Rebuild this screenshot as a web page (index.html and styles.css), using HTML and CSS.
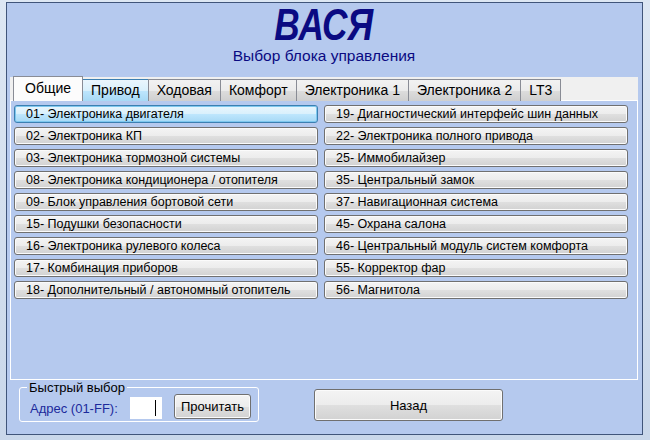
FILE: index.html
```html
<!DOCTYPE html>
<html lang="ru">
<head>
    <meta charset="UTF-8">
    <title>ВАСЯ - Выбор блока управления</title>
    <link rel="stylesheet" href="styles.css">
</head>
<body>
    <div class="frame">
        <div class="window">
            <div class="header">
                <h1 class="title"><span>ВАСЯ</span></h1>
                <p class="subtitle">Выбор блока управления</p>
            </div>

            <div class="tabs">
                <div class="tab-strip">
                    <div class="tab active">Общие</div>
                    <div class="tab hover">Привод</div>
                    <div class="tab">Ходовая</div>
                    <div class="tab">Комфорт</div>
                    <div class="tab">Электроника 1</div>
                    <div class="tab">Электроника 2</div>
                    <div class="tab">LT3</div>
                </div>
                <div class="tab-panel">
                    <div class="modules">
                        <button class="btn module focused">01- Электроника двигателя</button>
                        <button class="btn module">19- Диагностический интерфейс шин данных</button>
                        <button class="btn module">02- Электроника КП</button>
                        <button class="btn module">22- Электроника полного привода</button>
                        <button class="btn module">03- Электроника тормозной системы</button>
                        <button class="btn module">25- Иммобилайзер</button>
                        <button class="btn module">08- Электроника кондиционера / отопителя</button>
                        <button class="btn module">35- Центральный замок</button>
                        <button class="btn module">09- Блок управления бортовой сети</button>
                        <button class="btn module">37- Навигационная система</button>
                        <button class="btn module">15- Подушки безопасности</button>
                        <button class="btn module">45- Охрана салона</button>
                        <button class="btn module">16- Электроника рулевого колеса</button>
                        <button class="btn module">46- Центральный модуль систем комфорта</button>
                        <button class="btn module">17- Комбинация приборов</button>
                        <button class="btn module">55- Корректор фар</button>
                        <button class="btn module">18- Дополнительный / автономный отопитель</button>
                        <button class="btn module">56- Магнитола</button>
                    </div>
                </div>
            </div>

            <div class="bottom">
                <fieldset class="quick">
                    <legend>Быстрый выбор</legend>
                    <span class="addr-label">Адрес (01-FF):</span>
                    <div class="addr-box"><span class="caret"></span></div>
                    <button class="btn read">Прочитать</button>
                </fieldset>
                <button class="btn back">Назад</button>
            </div>
        </div>
    </div>
</body>
</html>
```

FILE: styles.css
```css
* {
    box-sizing: border-box;
}

body {
    margin: 0;
    background: #d4e0ef;
    font-family: "Liberation Sans", Arial, sans-serif;
    color: #000;
}

.frame {
    width: 650px;
    height: 440px;
    padding: 2px 7px 5px 6px;
    background: linear-gradient(#dde7f3, #c9d7ea);
}

.window {
    height: 100%;
    border: 1px solid #40557a;
    background: #b5c9ee;
    padding: 0 4px 0 3px;
    display: flex;
    flex-direction: column;
}

/* заголовок */
.header {
    height: 74px;
    text-align: center;
}

.title {
    margin: 0;
    font-size: 44px;
    line-height: 44px;
    font-weight: bold;
    font-style: italic;
    color: #0a0a82;
}

.title span {
    display: inline-block;
    transform: scaleX(0.8); /* шрифт в оригинале уже */
}

.subtitle {
    margin: 0;
    font-size: 15.5px;
    line-height: 18px;
    color: #0a0a82;
}

/* вкладки */
.tab-strip {
    height: 24px;
    background: #f0f0f0;
    padding-left: 3px;
    display: flex;
    align-items: flex-end;
    border-bottom: 1px solid #fff;
}

.tab {
    height: 22px;
    margin-bottom: -1px;
    padding: 0 8px;
    font-size: 14px;
    line-height: 21px;
    border: 1px solid #898c95;
    border-bottom: none;
    margin-right: -1px;
    background: linear-gradient(#f2f2f2, #ebebeb 50%, #dddddd 51%, #cfcfcf);
}

.tab.hover {
    background: linear-gradient(#eaf6fd, #d9f0fc 50%, #bee6fd 51%, #a7d9f5);
    border-color: #3c7fb1;
}

.tab.active {
    height: 25px;
    padding: 0 11px;
    line-height: 22px;
    background: #fcfcfc;
    position: relative;
    z-index: 1;
}

.tab-panel {
    height: 279px;
    border: 1px solid #fff;
    border-top: none;
    padding: 4px 0 0 3px;
}

.modules {
    display: grid;
    grid-template-columns: 304px 304px;
    column-gap: 6px;
    row-gap: 4px;
}

/* кнопки */
.btn {
    font-family: "Liberation Sans", Arial, sans-serif;
    font-size: 13px;
    color: #000;
    border: 1px solid #707070;
    border-radius: 3px;
    background: linear-gradient(#f4f4f4, #ececec 50%, #dfdfdf 51%, #d2d2d2);
    box-shadow: inset 0 0 0 1px #fbfbfb;
    padding: 0;
}

.module {
    height: 18px;
    text-align: left;
    padding-left: 11px;
    font-size: 12.5px;
    line-height: 17px;
}

.module.focused {
    border-color: #3c7fb1;
    background: linear-gradient(#eaf6fd, #d9f0fc 50%, #bee6fd 51%, #a7d9f5);
    box-shadow: inset 0 0 0 1px #7ec8ef;
}

/* нижняя часть */
.bottom {
    display: flex;
    align-items: flex-start;
    padding-left: 9px;
}

.quick {
    margin: 0;
    width: 240px;
    height: 42px;
    border: 1px solid #fff;
    border-radius: 3px;
    padding: 0 0 0 10px;
    display: flex;
    align-items: center;
}

.quick legend {
    font-size: 13px;
    line-height: 15px;
    padding: 0 2px;
    margin-left: -3px;
}

.addr-label {
    font-size: 13px;
    color: #1c2a9c;
    width: 90px;
}

.addr-box {
    width: 32px;
    height: 22px;
    background: #fff;
    margin-left: 10px;
    display: flex;
    justify-content: flex-end;
    align-items: center;
    padding-right: 6px;
}

.caret {
    width: 1px;
    height: 16px;
    background: #000;
}

.read {
    width: 77px;
    height: 25px;
    margin-left: 12px;
    margin-top: -3px;
}

.back {
    width: 189px;
    height: 32px;
    margin: 9px 0 0 55px;
}
```
